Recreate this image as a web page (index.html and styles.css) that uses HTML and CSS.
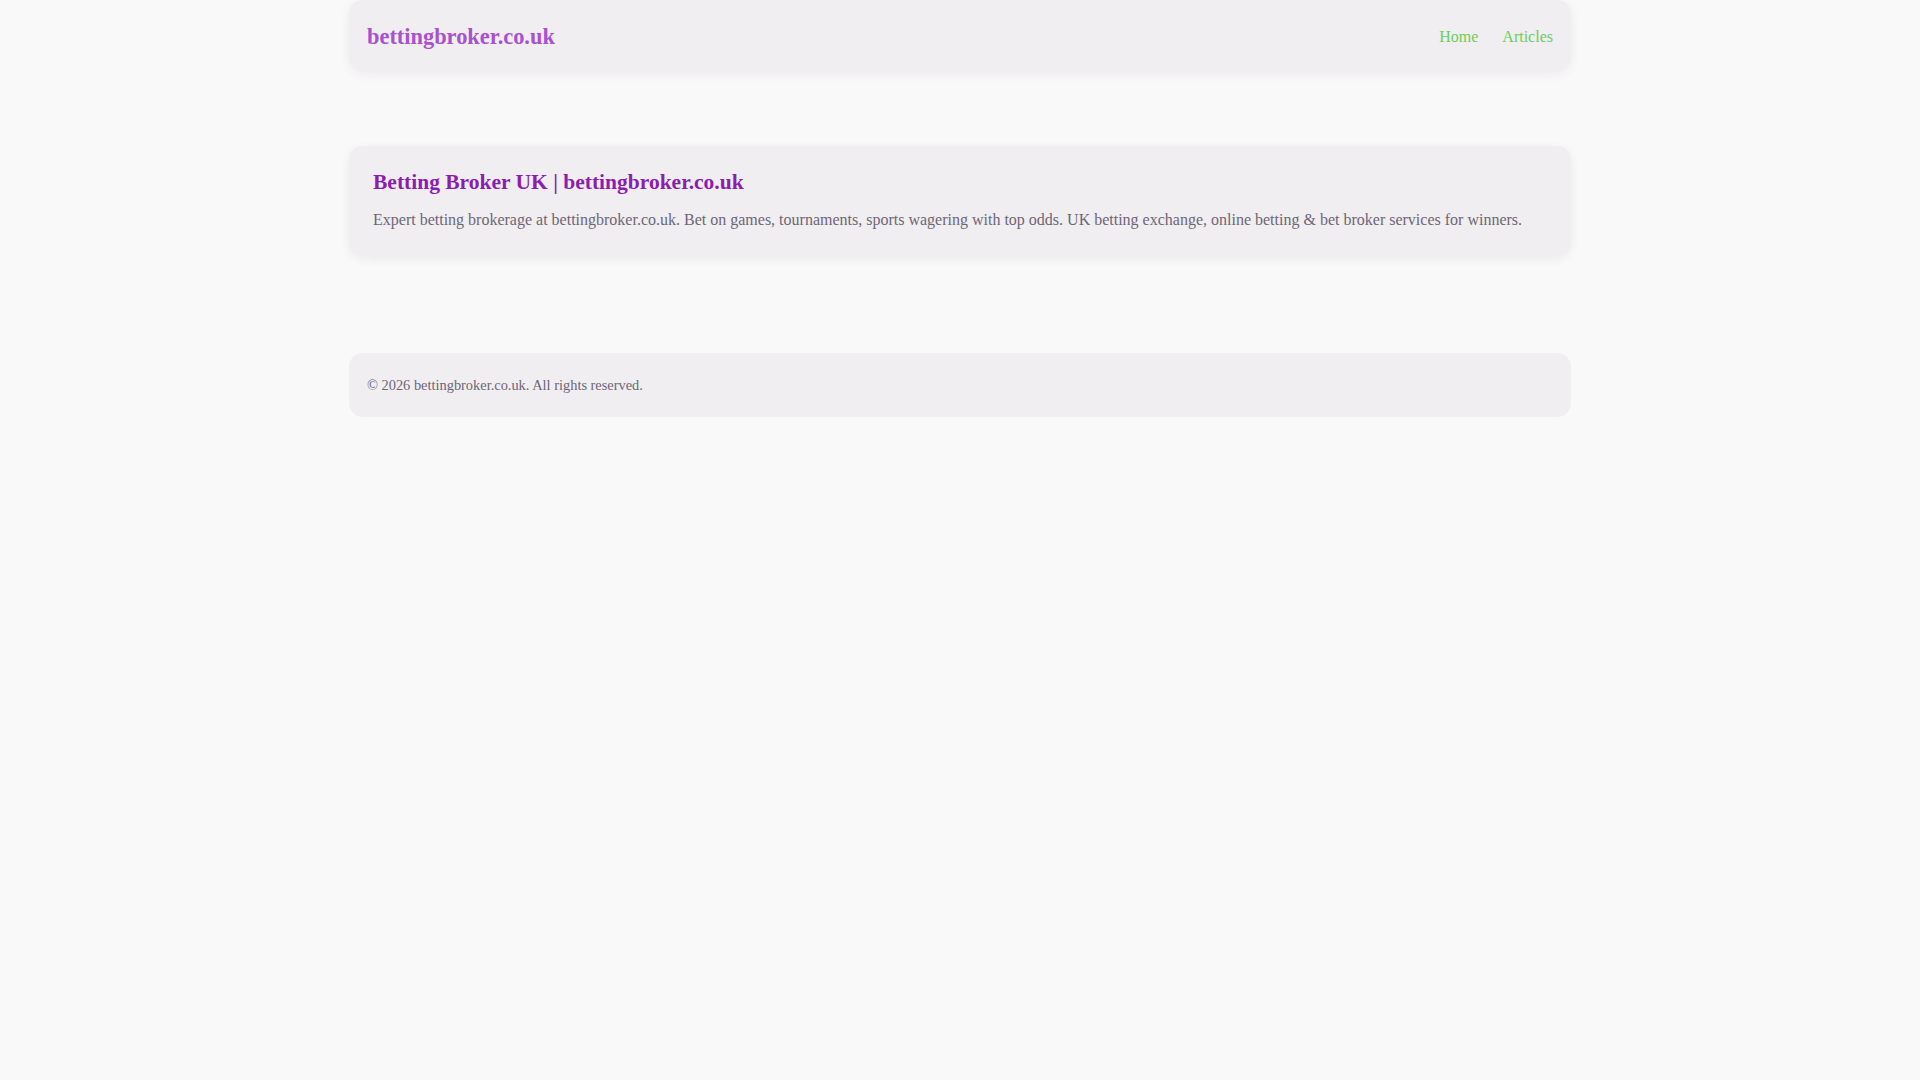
FILE: index.html
```html
<!DOCTYPE html>
<html lang="en">
<head>
<meta charset="utf-8">
<title>Betting Broker UK | bettingbroker.co.uk</title>
<link rel="stylesheet" href="styles.css">
</head>
<body>
<div class="wrap">
  <header class="site-header">
    <a class="logo" href="#">bettingbroker.co.uk</a>
    <nav class="nav">
      <a href="#">Home</a>
      <a href="#">Articles</a>
    </nav>
  </header>
  <main class="main">
    <section class="card">
      <h1 class="title">Betting Broker UK | bettingbroker.co.uk</h1>
      <p class="desc">Expert betting brokerage at bettingbroker.co.uk. Bet on games, tournaments, sports wagering with top odds. UK betting exchange, online betting &amp; bet broker services for winners.</p>
    </section>
  </main>
  <footer class="site-footer">
    <p>&copy; 2026 bettingbroker.co.uk. All rights reserved.</p>
  </footer>
</div>
</body>
</html>
```
FILE: styles.css
```css
* { box-sizing: border-box; }
html, body { margin: 0; padding: 0; }
body {
  background: #f9f9f9;
  font-family: "Liberation Serif", "Times New Roman", serif;
  color: #6e6577;
}
.wrap {
  width: 1222px;
  margin: 0 auto;
}
.site-header {
  height: 71px;
  display: flex;
  align-items: center;
  justify-content: space-between;
  padding: 2px 18px 0 18px;
  background: #f0eef1;
  border-radius: 14px;
  box-shadow: 0 3px 12px rgba(0, 0, 0, 0.06);
}
.logo {
  font-size: 22.4px;
  font-weight: bold;
  color: #a852cf;
  text-decoration: none;
}
.nav {
  display: flex;
  gap: 24px;
}
.nav a {
  font-size: 16px;
  color: #6bcf59;
  text-decoration: none;
}
.main {
  padding-top: 75px;
  padding-bottom: 97px;
}
.card {
  background: #f0eef1;
  border-radius: 14px;
  padding: 24px;
  box-shadow: 0 3px 12px rgba(0, 0, 0, 0.06);
}
.title {
  margin: 0 0 12px;
  font-size: 21.5px;
  line-height: 1.2;
  font-weight: bold;
  color: #8b1db0;
}
.desc {
  margin: 0;
  font-size: 16px;
  line-height: 24px;
  color: #6e6577;
}
.site-footer {
  background: #f0eef1;
  border-radius: 14px;
  padding: 24px 18px 23px 18px;
}
.site-footer p {
  margin: 0;
  font-size: 14.4px;
  line-height: 17px;
  color: #6e6577;
}
```
